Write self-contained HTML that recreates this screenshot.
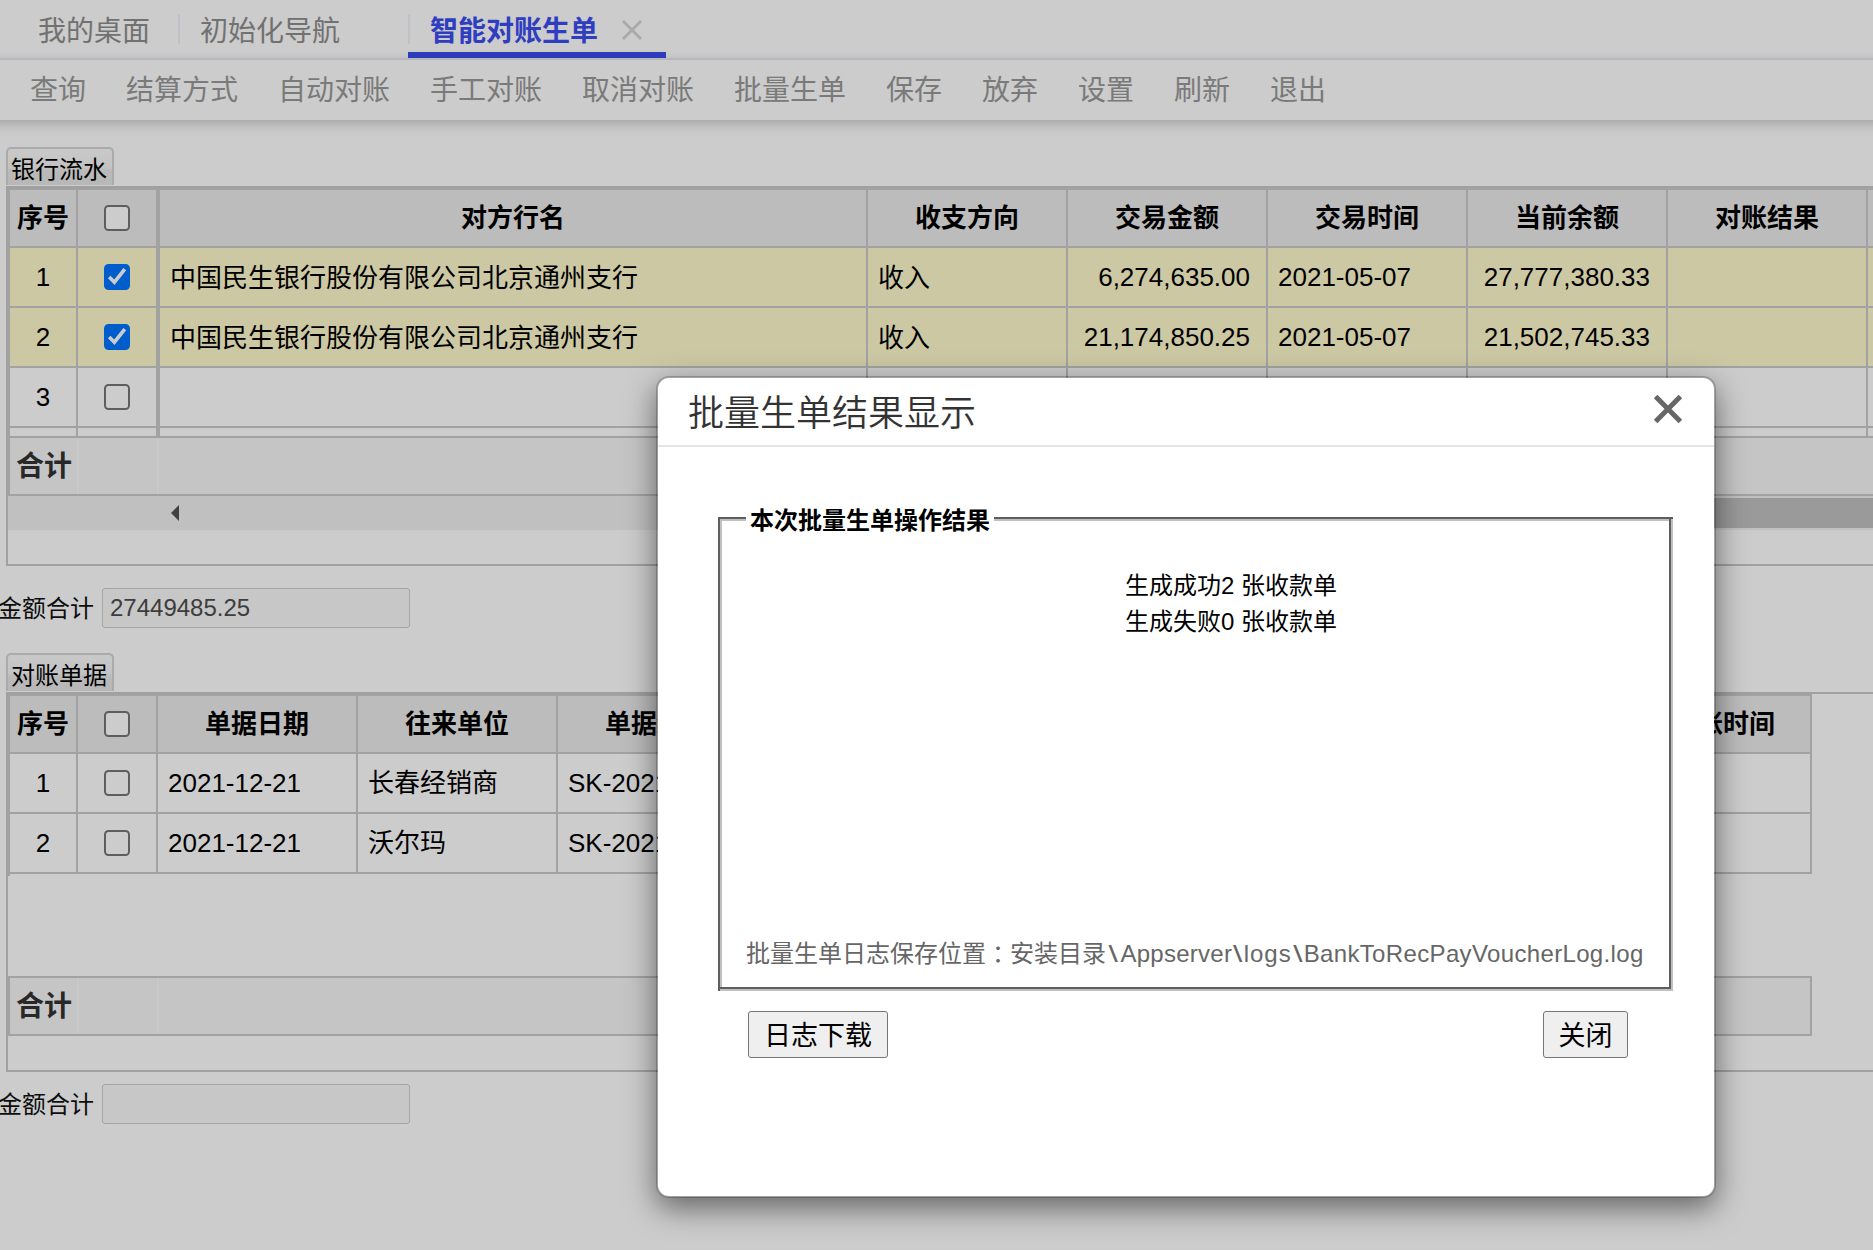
<!DOCTYPE html>
<html lang="zh-CN">
<head>
<meta charset="utf-8">
<title>智能对账生单</title>
<style>
*{box-sizing:border-box;margin:0;padding:0}
html,body{width:1873px;height:1250px;overflow:hidden;background:#fff}
body{position:relative;font-family:"Liberation Sans","Noto Sans CJK SC",sans-serif;color:#000;font-size:26px}
.abs{position:absolute}
/* top tabs */
#tabs{position:absolute;left:0;top:0;width:1873px;height:60px;background:#fff;border-bottom:2px solid #f3f3fd}
#tabs .t{position:absolute;top:12px;height:40px;line-height:40px;font-size:28px;color:#8e8e8e;white-space:nowrap}
#tabs .sep{position:absolute;top:14px;width:2px;height:30px;background:#f0f0f8}
#tabs .act{color:#3b4ef0;font-weight:bold}
#tabs .ul{position:absolute;left:408px;top:52px;width:258px;height:6px;background:#3b4ef0}
/* toolbar */
#tb{position:absolute;left:-30px;top:60px;width:1933px;height:60px;background:#fff;box-shadow:0 3px 12px rgba(0,0,0,.22)}
#tb span{position:absolute;margin-left:30px;top:11px;height:40px;line-height:40px;font-size:28px;color:#999;white-space:nowrap}
/* section tabs */
.stab{position:absolute;left:6px;width:108px;height:38px;border:2px solid #d6d6d6;border-bottom:none;border-radius:5px 5px 0 0;background:linear-gradient(#fcfcfc 0%,#f4f4f4 52%,#e9e9e9 60%,#e6e6e6 100%);font-size:24px;line-height:41px;padding-left:3px;white-space:nowrap;color:#000}
.box{position:absolute;left:6px;border:2px solid #c9c9c9;border-right:none}
.cell{position:absolute;white-space:nowrap;overflow:hidden}
.hd{background:#ececec;font-weight:bold;text-align:center}
.ln{position:absolute;background:#c8c8c8}
.cb{position:absolute;width:26px;height:26px;border:2px solid #767676;border-radius:4.5px;background:#fff}
.cb.on{background:#0075ff;border-color:#0075ff}
.lbl{position:absolute;left:-2px;font-size:24px;white-space:nowrap;color:#111}
.inp{position:absolute;left:102px;width:308px;height:40px;border:1px solid #d0d0d0;background:#f9f9f9;border-radius:3px;font-size:24px;line-height:38px;padding-left:7px;color:#4d4d4d}
#ov{position:absolute;left:0;top:0;width:1873px;height:1250px;background:rgba(0,0,0,.2)}
/* modal */
#md{position:absolute;left:656px;top:376px;width:1060px;height:822px;background:#fff;border-radius:13px;border:2px solid rgba(0,0,0,.2);background-clip:padding-box;box-shadow:0 10px 30px rgba(0,0,0,.5)}
.btn{position:absolute;border:1px solid #767676;border-radius:3px;background:#efefef;font-size:27px;text-align:center;line-height:48px;color:#000;white-space:nowrap}
</style>
</head>
<body>
<div id="tabs">
  <div class="t" style="left:38px">我的桌面</div>
  <div class="sep" style="left:178px"></div>
  <div class="t" style="left:200px">初始化导航</div>
  <div class="sep" style="left:408px"></div>
  <div class="t act" style="left:430px">智能对账生单</div>
  <svg class="abs" style="left:621px;top:19px" width="22" height="22" viewBox="0 0 22 22"><path d="M2 2L20 20M20 2L2 20" stroke="#d2d2d2" stroke-width="2.6" fill="none"/></svg>
  <div class="ul"></div>
</div>
<div id="tb">
  <span style="left:30px">查询</span>
  <span style="left:126px">结算方式</span>
  <span style="left:278px">自动对账</span>
  <span style="left:430px">手工对账</span>
  <span style="left:582px">取消对账</span>
  <span style="left:734px">批量生单</span>
  <span style="left:886px">保存</span>
  <span style="left:982px">放弃</span>
  <span style="left:1078px">设置</span>
  <span style="left:1174px">刷新</span>
  <span style="left:1270px">退出</span>
</div>
<!--CONTENT-->
<div class="stab" style="top:147px">银行流水</div>
<div class="box" style="top:186px;width:1880px;height:380px"></div>
<div class="cell hd" style="left:8px;top:188px;width:1873px;height:60px;line-height:60px;"></div>
<div class="cell " style="left:8px;top:248px;width:1873px;height:120px;line-height:120px;background:#fffacd"></div>
<div class="ln" style="left:8px;top:188px;width:1873px;height:2px;background:#cbcbcb"></div>
<div class="ln" style="left:8px;top:188px;width:2px;height:308px;background:#cbcbcb"></div>
<div class="cell hd" style="left:10px;top:190px;width:66px;height:56px;line-height:56px;">序号</div>
<div class="cell hd" style="left:78px;top:190px;width:78px;height:56px;line-height:56px;"></div>
<div class="cell hd" style="left:160px;top:190px;width:706px;height:56px;line-height:56px;">对方行名</div>
<div class="cell hd" style="left:868px;top:190px;width:198px;height:56px;line-height:56px;">收支方向</div>
<div class="cell hd" style="left:1068px;top:190px;width:198px;height:56px;line-height:56px;">交易金额</div>
<div class="cell hd" style="left:1268px;top:190px;width:198px;height:56px;line-height:56px;">交易时间</div>
<div class="cell hd" style="left:1468px;top:190px;width:198px;height:56px;line-height:56px;">当前余额</div>
<div class="cell hd" style="left:1668px;top:190px;width:198px;height:56px;line-height:56px;">对账结果</div>
<div class="cb" style="left:104px;top:205px"></div>
<div class="ln" style="left:10px;top:246px;width:1873px;height:2px;background:#cbcbcb"></div>
<div class="ln" style="left:10px;top:306px;width:1873px;height:2px;background:#cbcbcb"></div>
<div class="ln" style="left:10px;top:366px;width:1873px;height:2px;background:#cbcbcb"></div>
<div class="ln" style="left:10px;top:426px;width:1873px;height:2px;background:#cbcbcb"></div>
<div class="ln" style="left:10px;top:436px;width:1873px;height:2px;background:#cbcbcb"></div>
<div class="ln" style="left:76px;top:190px;width:2px;height:246px;background:#cbcbcb"></div>
<div class="ln" style="left:866px;top:190px;width:2px;height:246px;background:#cbcbcb"></div>
<div class="ln" style="left:1066px;top:190px;width:2px;height:246px;background:#cbcbcb"></div>
<div class="ln" style="left:1266px;top:190px;width:2px;height:246px;background:#cbcbcb"></div>
<div class="ln" style="left:1466px;top:190px;width:2px;height:246px;background:#cbcbcb"></div>
<div class="ln" style="left:1666px;top:190px;width:2px;height:246px;background:#cbcbcb"></div>
<div class="ln" style="left:1866px;top:190px;width:2px;height:246px;background:#cbcbcb"></div>
<div class="ln" style="left:156px;top:190px;width:4px;height:246px;background:#cbcbcb"></div>
<div class="cell " style="left:10px;top:248px;width:66px;height:58px;line-height:58px;text-align:center">1</div>
<div class="cb on" style="left:104px;top:264px"><svg width="26" height="26" viewBox="0 0 26 26" style="position:absolute;left:-2px;top:-2px"><path d="M5.2 13L10.4 18.2L20.8 5.2" stroke="#fff" stroke-width="3.6" fill="none"/></svg></div>
<div class="cell " style="left:160px;top:248px;width:706px;height:58px;line-height:58px;padding-left:10px;padding-top:1px">中国民生银行股份有限公司北京通州支行</div>
<div class="cell " style="left:868px;top:248px;width:198px;height:58px;line-height:58px;padding-left:10px;padding-top:1px">收入</div>
<div class="cell " style="left:1068px;top:248px;width:198px;height:58px;line-height:58px;text-align:right;padding-right:16px">6,274,635.00</div>
<div class="cell " style="left:1268px;top:248px;width:198px;height:58px;line-height:58px;padding-left:10px">2021-05-07</div>
<div class="cell " style="left:1468px;top:248px;width:198px;height:58px;line-height:58px;text-align:right;padding-right:16px">27,777,380.33</div>
<div class="cell " style="left:10px;top:308px;width:66px;height:58px;line-height:58px;text-align:center">2</div>
<div class="cb on" style="left:104px;top:324px"><svg width="26" height="26" viewBox="0 0 26 26" style="position:absolute;left:-2px;top:-2px"><path d="M5.2 13L10.4 18.2L20.8 5.2" stroke="#fff" stroke-width="3.6" fill="none"/></svg></div>
<div class="cell " style="left:160px;top:308px;width:706px;height:58px;line-height:58px;padding-left:10px;padding-top:1px">中国民生银行股份有限公司北京通州支行</div>
<div class="cell " style="left:868px;top:308px;width:198px;height:58px;line-height:58px;padding-left:10px;padding-top:1px">收入</div>
<div class="cell " style="left:1068px;top:308px;width:198px;height:58px;line-height:58px;text-align:right;padding-right:16px">21,174,850.25</div>
<div class="cell " style="left:1268px;top:308px;width:198px;height:58px;line-height:58px;padding-left:10px">2021-05-07</div>
<div class="cell " style="left:1468px;top:308px;width:198px;height:58px;line-height:58px;text-align:right;padding-right:16px">21,502,745.33</div>
<div class="cell " style="left:10px;top:368px;width:66px;height:58px;line-height:58px;text-align:center">3</div>
<div class="cb" style="left:104px;top:384px"></div>
<div class="cell " style="left:160px;top:368px;width:706px;height:58px;line-height:58px;padding-left:10px;padding-top:1px"></div>
<div class="cell " style="left:868px;top:368px;width:198px;height:58px;line-height:58px;padding-left:10px;padding-top:1px"></div>
<div class="cell " style="left:1068px;top:368px;width:198px;height:58px;line-height:58px;text-align:right;padding-right:16px"></div>
<div class="cell " style="left:1268px;top:368px;width:198px;height:58px;line-height:58px;padding-left:10px"></div>
<div class="cell " style="left:1468px;top:368px;width:198px;height:58px;line-height:58px;text-align:right;padding-right:16px"></div>
<div class="cell " style="left:10px;top:438px;width:1873px;height:56px;line-height:56px;background:#f7f7f7"></div>
<div class="cell " style="left:10px;top:439px;width:66px;height:56px;line-height:56px;font-weight:bold;font-size:28px;color:#333;padding-left:6px">合计</div>
<div class="ln" style="left:77px;top:438px;width:2px;height:56px;background:#fafafa"></div>
<div class="ln" style="left:157px;top:438px;width:2px;height:56px;background:#fafafa"></div>
<div class="ln" style="left:867px;top:438px;width:2px;height:56px;background:#fafafa"></div>
<div class="ln" style="left:1067px;top:438px;width:2px;height:56px;background:#fafafa"></div>
<div class="ln" style="left:1267px;top:438px;width:2px;height:56px;background:#fafafa"></div>
<div class="ln" style="left:1467px;top:438px;width:2px;height:56px;background:#fafafa"></div>
<div class="ln" style="left:1667px;top:438px;width:2px;height:56px;background:#fafafa"></div>
<div class="ln" style="left:10px;top:494px;width:1873px;height:2px;background:#cbcbcb"></div>
<div class="cell " style="left:8px;top:496px;width:1873px;height:34px;line-height:34px;background:#f1f1f1"></div>
<svg class="abs" style="left:170px;top:504px" width="10" height="18" viewBox="0 0 10 18"><path d="M9 1L1 9L9 17Z" fill="#505050"/></svg>
<div class="cell " style="left:1600px;top:498px;width:300px;height:30px;line-height:30px;background:#c1c1c1"></div>
<div class="lbl" style="top:589px;line-height:40px">金额合计</div>
<div class="inp" style="top:588px">27449485.25</div>
<div class="stab" style="top:653px">对账单据</div>
<div class="box" style="top:692px;width:1880px;height:380px"></div>
<div class="cell hd" style="left:8px;top:694px;width:1804px;height:60px;line-height:60px;"></div>
<div class="ln" style="left:8px;top:694px;width:1804px;height:2px;background:#cbcbcb"></div>
<div class="ln" style="left:8px;top:694px;width:2px;height:182px;background:#cbcbcb"></div>
<div class="cell hd" style="left:10px;top:696px;width:66px;height:56px;line-height:56px;">序号</div>
<div class="cell hd" style="left:78px;top:696px;width:78px;height:56px;line-height:56px;"></div>
<div class="cell hd" style="left:158px;top:696px;width:198px;height:56px;line-height:56px;">单据日期</div>
<div class="cell hd" style="left:358px;top:696px;width:198px;height:56px;line-height:56px;">往来单位</div>
<div class="cell hd" style="left:558px;top:696px;width:198px;height:56px;line-height:56px;">单据编号</div>
<div class="cell hd" style="left:1636px;top:696px;width:174px;height:56px;line-height:56px;">对账时间</div>
<div class="cb" style="left:104px;top:711px"></div>
<div class="ln" style="left:10px;top:752px;width:1802px;height:2px;background:#cbcbcb"></div>
<div class="ln" style="left:10px;top:812px;width:1802px;height:2px;background:#cbcbcb"></div>
<div class="ln" style="left:10px;top:872px;width:1802px;height:2px;background:#cbcbcb"></div>
<div class="ln" style="left:76px;top:696px;width:2px;height:178px;background:#cbcbcb"></div>
<div class="ln" style="left:156px;top:696px;width:2px;height:178px;background:#cbcbcb"></div>
<div class="ln" style="left:356px;top:696px;width:2px;height:178px;background:#cbcbcb"></div>
<div class="ln" style="left:556px;top:696px;width:2px;height:178px;background:#cbcbcb"></div>
<div class="ln" style="left:756px;top:696px;width:2px;height:178px;background:#cbcbcb"></div>
<div class="ln" style="left:956px;top:696px;width:2px;height:178px;background:#cbcbcb"></div>
<div class="ln" style="left:1156px;top:696px;width:2px;height:178px;background:#cbcbcb"></div>
<div class="ln" style="left:1356px;top:696px;width:2px;height:178px;background:#cbcbcb"></div>
<div class="ln" style="left:1556px;top:696px;width:2px;height:178px;background:#cbcbcb"></div>
<div class="ln" style="left:1810px;top:696px;width:2px;height:178px;background:#cbcbcb"></div>
<div class="cell " style="left:10px;top:754px;width:66px;height:58px;line-height:58px;text-align:center">1</div>
<div class="cb" style="left:104px;top:770px"></div>
<div class="cell " style="left:158px;top:754px;width:198px;height:58px;line-height:58px;padding-left:10px">2021-12-21</div>
<div class="cell " style="left:358px;top:754px;width:198px;height:58px;line-height:58px;padding-left:10px">长春经销商</div>
<div class="cell " style="left:558px;top:754px;width:198px;height:58px;line-height:58px;padding-left:10px">SK-2021-12-0001</div>
<div class="cell " style="left:10px;top:814px;width:66px;height:58px;line-height:58px;text-align:center">2</div>
<div class="cb" style="left:104px;top:830px"></div>
<div class="cell " style="left:158px;top:814px;width:198px;height:58px;line-height:58px;padding-left:10px">2021-12-21</div>
<div class="cell " style="left:358px;top:814px;width:198px;height:58px;line-height:58px;padding-left:10px">沃尔玛</div>
<div class="cell " style="left:558px;top:814px;width:198px;height:58px;line-height:58px;padding-left:10px">SK-2021-12-0002</div>
<div class="ln" style="left:8px;top:976px;width:1804px;height:2px;background:#cbcbcb"></div>
<div class="ln" style="left:8px;top:976px;width:2px;height:60px;background:#cbcbcb"></div>
<div class="ln" style="left:1810px;top:976px;width:2px;height:60px;background:#cbcbcb"></div>
<div class="cell " style="left:10px;top:978px;width:1800px;height:56px;line-height:56px;background:#f7f7f7"></div>
<div class="cell " style="left:10px;top:979px;width:66px;height:56px;line-height:56px;font-weight:bold;font-size:28px;color:#333;padding-left:6px">合计</div>
<div class="ln" style="left:77px;top:978px;width:2px;height:56px;background:#fafafa"></div>
<div class="ln" style="left:157px;top:978px;width:2px;height:56px;background:#fafafa"></div>
<div class="ln" style="left:8px;top:1034px;width:1804px;height:2px;background:#cbcbcb"></div>
<div class="lbl" style="top:1085px;line-height:40px">金额合计</div>
<div class="inp" style="top:1084px"></div>
<!--/CONTENT-->
<div id="ov"></div>
<div id="md">
<!--MODAL-->
<div class="abs" style="left:30px;top:12px;font-size:36px;line-height:48px;color:#333;white-space:nowrap;font-weight:350">批量生单结果显示</div>
<svg class="abs" style="left:994px;top:15px" width="32" height="32" viewBox="0 0 32 32"><path d="M3.6 3.6L28.4 28.4M28.4 3.6L3.6 28.4" stroke="#666" stroke-width="5" fill="none"/></svg>
<div class="abs" style="left:0px;top:67px;width:1056px;height:2px;background:#e5e5e5"></div>
<fieldset class="abs" id="fs" style="left:60px;top:125px;width:955px;height:488px;border:4px groove #c0c0c0;padding:0 24px;min-width:0"><legend style="padding:0 4px;font-size:24px;font-weight:bold;line-height:32px;color:#000;white-space:nowrap"><span style="position:relative;top:2px">本次批量生单操作结果</span></legend></fieldset>
<div class="abs" style="left:60px;top:139px;width:2px;height:474px;background:#5e5e5e"></div>
<div class="abs" style="left:60px;top:139px;width:28px;height:2px;background:#5e5e5e"></div>
<div class="abs" style="left:336px;top:139px;width:679px;height:2px;background:#5e5e5e"></div>
<div class="abs" style="left:62px;top:609px;width:951px;height:2px;background:#5e5e5e"></div>
<div class="abs" style="left:1011px;top:141px;width:2px;height:470px;background:#5e5e5e"></div>
<div class="abs" id="res" style="left:353px;top:190px;width:440px;text-align:center;font-size:24px;line-height:36px;color:#000;white-space:nowrap">生成成功2 张收款单<br>生成失败0 张收款单</div>
<div class="abs" id="logp" style="left:88px;top:558px;font-size:24px;line-height:36px;color:#666;white-space:nowrap">批量生单日志保存位置<span style="position:relative;left:6px">：</span>安装目录<span style="display:inline-block;width:14.5px;text-align:center;transform:scaleX(1.4)">\</span><span style="letter-spacing:.25px">Appserver</span><span style="display:inline-block;width:11.5px;text-align:center;transform:scaleX(1.4)">\</span><span style="letter-spacing:1px">logs</span><span style="display:inline-block;width:12px;text-align:center;transform:scaleX(1.4)">\</span><span style="letter-spacing:.35px">BankToRecPayVoucherLog.log</span></div>
<div class="btn" style="left:90px;top:633px;width:140px;height:47px">日志下载</div>
<div class="btn" style="left:885px;top:633px;width:85px;height:47px">关闭</div>
<!--/MODAL-->
</div>
</body>
</html>
